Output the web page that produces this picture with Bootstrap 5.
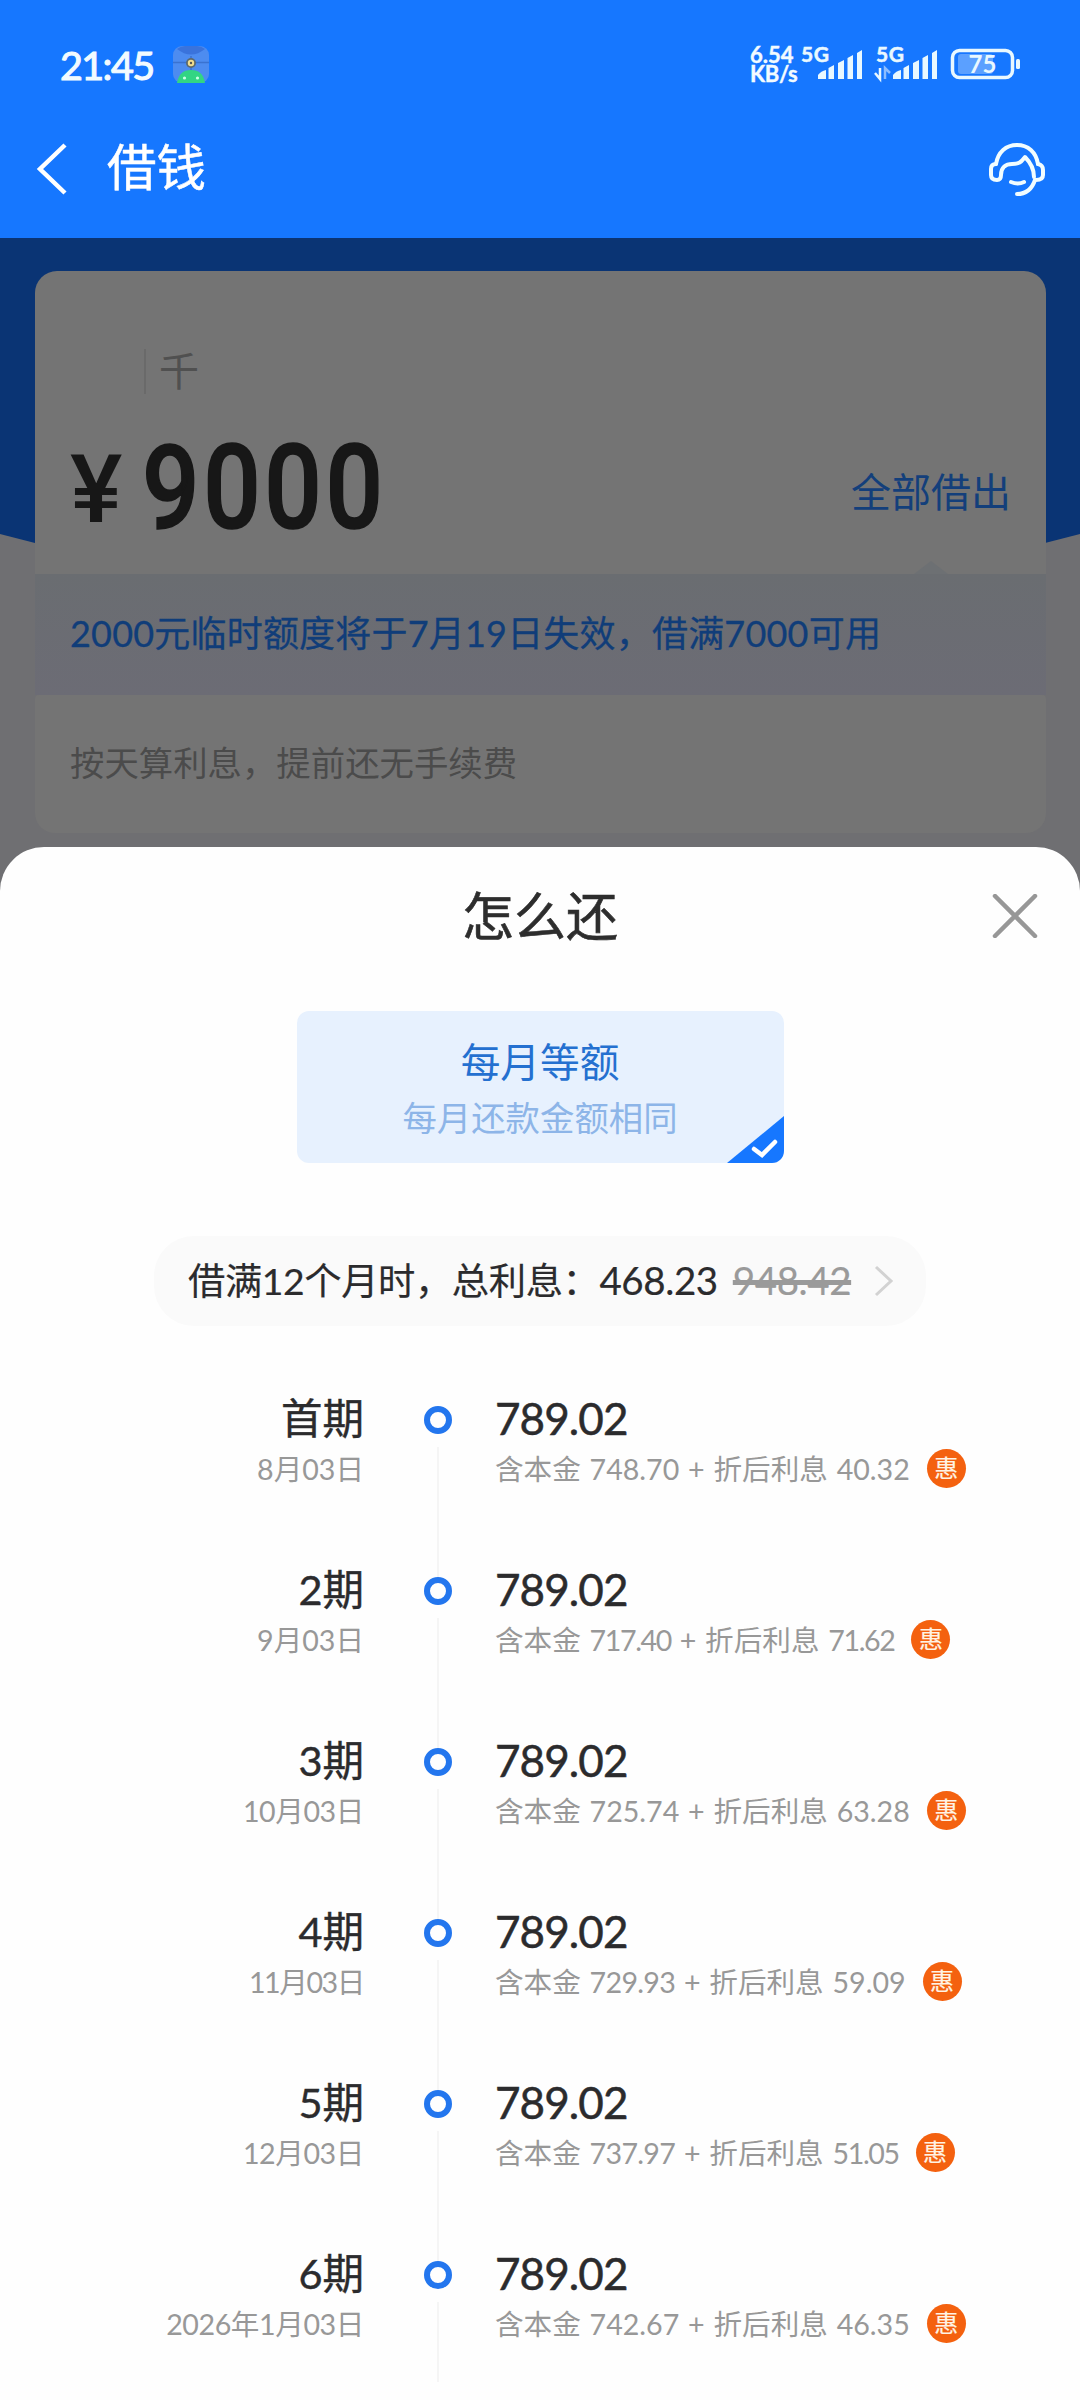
<!DOCTYPE html>
<html lang="zh-CN">
<head>
<meta charset="utf-8">
<meta name="viewport" content="width=device-width, initial-scale=1">
<title>借钱</title>
<link href="https://cdn.jsdelivr.net/npm/bootstrap@5.3.0/dist/css/bootstrap.min.css" rel="stylesheet">
<style>
  body { width: 1080px; height: 2400px; overflow: hidden; background: #fefefe; color: #2b2b2d; font-family: Lato, "Noto Sans CJK SC", sans-serif; }
  svg { display: block; flex: none; }
  .app-top { height: 238px; background: #1677ff; color: #f2fbff; }
  .status { height: 84px; padding: 44px 59px 0 60px; }
  .clock { font-size: 39.5px; line-height: 41px; letter-spacing: -1.6px; -webkit-text-stroke: 1.1px #f2fbff; width: 113px; }
  .speed { font-size: 22px; line-height: 19px; font-weight: 700; width: 49px; padding-top: 1px; white-space: nowrap; -webkit-text-stroke: .4px #f2fbff; }
  .speed div + div { letter-spacing: -.3px; }
  .titlebar { height: 84px; margin-top: 43px; padding: 0 34px 0 36px; line-height: 80px; font-size: 49.5px; color: #fff; -webkit-text-stroke: .5px #fff; }
  .titlebar span { margin-left: 39px; margin-top: -4px; }
  .stage { height: 670px; background: #6f6f72; padding: 33px 34px 0 35px; }
  .stage-blue { inset: 0 0 auto 0; height: 305px; background: #0a3474; clip-path: polygon(0 0, 100% 0, 100% 296px, 1045px 100%, 35px 100%, 0 296px); }
  .quota { height: 303px; background: #747474; border-radius: 22px 22px 0 0; padding: 78px 34px 0 35px; }
  .unit { margin-left: 74px; height: 45px; border-left: 2px solid #6a6a6a; padding-left: 13px; font-size: 40px; line-height: 44px; color: #505050; }
  .yen { font: 500 94px/96px Roboto, sans-serif; color: #171717; width: 72px; padding-top: 18px; transform: scaleX(1.05); transform-origin: 0 0; }
  .sum { font: 500 117px/120px Roboto, sans-serif; color: #171717; letter-spacing: 4.2px; -webkit-text-stroke: 1.5px #171717; transform: translateY(4px) scaleX(.865); transform-origin: 0 0; }
  .quota-link { font-size: 40px; line-height: 50px; color: #133f7b; padding-top: 15px; margin-right: 1px; }
  .notice { height: 121px; background: linear-gradient(#6a6d71, #6c6c75); padding: 0 35px; font-size: 36px; line-height: 119px; letter-spacing: .2px; color: #103d79; -webkit-text-stroke: .3px #103d79; }
  .notice svg { top: -13px; right: 98px; }
  .rule { height: 138px; background: #747474; border-radius: 4px 4px 20px 20px; padding: 0 35px; font-size: 34.4px; line-height: 136px; color: #4b4b4b; }
  .sheet { margin-top: -61px; height: 1553px; background: #fefefe; border-radius: 44px 44px 0 0; }
  .sheet-head { height: 164px; padding: 0 42px 26px; font-size: 52px; color: #2d2d2d; -webkit-text-stroke: .6px #2d2d2d; }
  .plan { width: 487px; height: 152px; border-radius: 12px; background: #e7f1fe; overflow: hidden; padding-top: 26px; color: #2470d0; font-size: 39.7px; line-height: 50px; }
  .plan small { display: block; font-size: 34.4px; line-height: 62px; color: #8db5e8; }
  .plan svg { right: 0; bottom: 0; }
  .total { width: 772px; height: 90px; margin-top: 73px; margin-bottom: 1px; border-radius: 40px; background: #fafafa; font-size: 37.3px; padding-left: 34px; white-space: nowrap; letter-spacing: -.4px; -webkit-text-stroke: .2px; }
  .total .now { font-size: 38.5px; }
  .total .was { font-size: 38.5px; color: #9a9a9a; text-decoration: line-through; text-decoration-thickness: 5px; margin-left: 15px; }
  .schedule { margin-top: 57px; }
  .term { height: 171px; white-space: nowrap; }
  .when { width: 364px; font-size: 41.5px; line-height: 70px; -webkit-text-stroke: .4px; }
  .when div + div, .what .parts { font-size: 28.6px; line-height: 32px; color: #989898; -webkit-text-stroke: 0; }
  .when .k2 { letter-spacing: -.4px; }
  .when .k1 { letter-spacing: -1.4px; }
  .axis { width: 28px; margin-left: 60px; margin-right: 43px; padding-top: 23px; }
  .axis i { width: 28px; height: 28px; flex: none; border: 6.5px solid #2376ee; border-radius: 50%; margin-bottom: 13px; }
  .axis b { width: 2px; height: 130px; flex: none; background: #f5f5f5; }
  .term:last-child .axis b { height: 80px; }
  .amount { font-size: 44px; line-height: 70px; letter-spacing: -.9px; color: #2b2b2d; -webkit-text-stroke: .5px; }
  .parts { word-spacing: 1.5px; }
  .k1 { letter-spacing: -1.4px; } .k2 { letter-spacing: -.7px; }
  .hui { width: 39px; height: 39px; margin: -4px 0 -3px 17px; border-radius: 50%; background: #f4610f; color: #fff3e4; font-size: 24px; line-height: 38px; text-align: center; -webkit-text-stroke: .2px; }
</style>
<script src="https://cdn.jsdelivr.net/npm/bootstrap@5.3.0/dist/js/bootstrap.bundle.min.js"></script>
</head>
<body>
<header class="app-top">
  <div class="status d-flex justify-content-between align-items-start">
    <div class="d-flex">
      <div class="clock">21:45</div>
      <svg width="36" height="37" viewBox="0 0 36 37" style="margin-top:2px"><rect width="36" height="37" rx="9" fill="#4d8cf0"/><path d="M4 3Q18 14 32 3Q28 0 24 0H12Q8 0 4 3Z" fill="#3a73dc"/><path d="M0 16.500H36M18 10V24" stroke="#3a72d0" stroke-width="1.500"/><path d="M4 37Q6 24 18 24T32 37Z" fill="#32d583"/><circle cx="18" cy="17" r="5" fill="#5c6a70"/><circle cx="18" cy="17" r="3.200" fill="#f1dd8d"/><circle cx="18" cy="17" r="1.200" fill="#555"/><circle cx="11.500" cy="32" r="1.600" fill="#c9ffe5"/><circle cx="24.500" cy="32" r="1.600" fill="#c9ffe5"/></svg>
    </div>
    <div class="d-flex">
      <div class="speed"><div>6.54</div><div>KB/s</div></div>
      <svg width="222" height="46" viewBox="799 38 222 46" style="margin-top:-6px" fill="#e9f8ff" font-family="Lato" font-weight="700">
        <text x="801" y="62" font-size="21" textLength="28" stroke="#e9f8ff" stroke-width=".5">5G</text><text x="876" y="62" font-size="21" textLength="28" stroke="#e9f8ff" stroke-width=".5">5G</text>
        <path id="bars" d="M818 79V75Q821 71 826 70V79ZM828.500 79V68L834 65V79ZM838 79V63L844 60V79ZM847.500 79V58L853 55V79ZM857 79V53L862 50V79Z"/>
        <use href="#bars" x="75"/>
        <path d="M875 73L880 79V68" fill="none" stroke="#e9f8ff" stroke-width="2.500"/><path d="M885 79V68L890 73" fill="none" stroke="#8dbdff" stroke-width="2.500"/>
        <rect x="952.500" y="50.500" width="60" height="27" rx="7" fill="none" stroke="#e9f8ff" stroke-width="3.500"/>
        <rect x="958" y="54" width="35" height="20" rx="3" fill="#5ba0ff"/><rect x="1016" y="59" width="4" height="10" rx="1.500"/>
        <text x="968.500" y="73" font-size="24" textLength="28">75</text>
      </svg>
    </div>
  </div>
  <div class="titlebar d-flex align-items-center">
    <svg width="32" height="52" viewBox="0 0 32 52" fill="none" stroke="#fff" stroke-width="4.500"><path d="M29 2L4 26L29 50"/></svg>
    <span>借钱</span>
    <svg class="ms-auto" width="58" height="54" viewBox="0 0 58 54" fill="none" stroke="#f2fdff" stroke-width="4" stroke-linejoin="round" stroke-linecap="round"><path d="M8 22C10 10 18 3 29 3S48 10 50 22"/><path d="M8 22Q3 22 3 27V33Q3 38 9 38Q13 38 13 33C13 25 18 22 24 22C32 22 33 20 37 15C42 20 46 27 46 35"/><path d="M50 22Q55 23 55 28V33Q55 38 48 38M47 38C44 47 39 52 29 52" /><path d="M23 40Q30 43 36 40"/></svg>
  </div>
</header>

<section class="stage position-relative">
  <div class="stage-blue position-absolute"></div>
  <div class="position-relative">
    <div class="quota">
      <div class="unit">千</div>
      <div class="d-flex" style="margin-top:30px">
        <div class="yen">¥</div><div class="sum">9000</div>
        <div class="quota-link ms-auto mt-auto mb-auto">全部借出</div>
      </div>
    </div>
    <div class="notice position-relative"><svg class="position-absolute" width="34" height="13"><path d="M0 13L17 0L34 13Z" fill="#6d7073"/></svg>2000元临时额度将于7月19日失效，借满7000可用</div>
    <div class="rule">按天算利息，提前还无手续费</div>
  </div>
</section>

<main class="sheet position-relative">
  <div class="sheet-head d-flex align-items-center justify-content-between">
    <span style="width:46px"></span><span>怎么还</span>
    <svg width="46" height="44" viewBox="0 0 46 44" fill="none" stroke="#979797" stroke-width="4.500" stroke-linecap="round"><path d="M3 2L43 42M43 2L3 42"/></svg>
  </div>
  <div class="plan mx-auto text-center position-relative">每月等额<small>每月还款金额相同</small>
    <svg class="position-absolute" width="57" height="47" viewBox="0 0 57 47"><path d="M57 0V47H0Z" fill="#1677ff"/><path d="M27 33L35 39L48 26" fill="none" stroke="#fff" stroke-width="4.500" stroke-linecap="round"/></svg>
  </div>
  <div class="total mx-auto d-flex align-items-center"><span>借满12个月时，总利息：</span><span class="now">468.23</span><span class="was">948.42</span>
    <svg width="20" height="32" viewBox="0 0 20 32" fill="none" stroke="#d2d2d2" stroke-width="3" style="margin-left:23px"><path d="M2 2L17 16L2 30"/></svg>
  </div>
  <div class="schedule" id="schedule"></div>
</main>
<script>
  const terms = [
    ["首期", "8月03日", "748.70", "", "40.32", "", ""],
    ["2期", "9月03日", "717.40", "k1", "71.62", "k1", ""],
    ["3期", "10月03日", "725.74", "", "63.28", "", "k2"],
    ["4期", "11月03日", "729.93", "k2", "59.09", "", "k1"],
    ["5期", "12月03日", "737.97", "k2", "51.05", "k1", "k2"],
    ["6期", "2026年1月03日", "742.67", "", "46.35", "", "k2"]
  ];
  document.getElementById("schedule").innerHTML = terms.map(t => `
    <div class="term d-flex">
      <div class="when text-end"><div>${t[0]}</div><div class="${t[6]}">${t[1]}</div></div>
      <div class="axis d-flex flex-column align-items-center"><i></i><b></b></div>
      <div class="what"><div class="amount">789.02</div>
        <div class="parts d-flex align-items-center"><span>含本金 <span class="${t[3]}">${t[2]}</span> + 折后利息 <span class="${t[5]}">${t[4]}</span></span><span class="hui">惠</span></div></div>
    </div>`).join("");
</script>
</body>
</html>
